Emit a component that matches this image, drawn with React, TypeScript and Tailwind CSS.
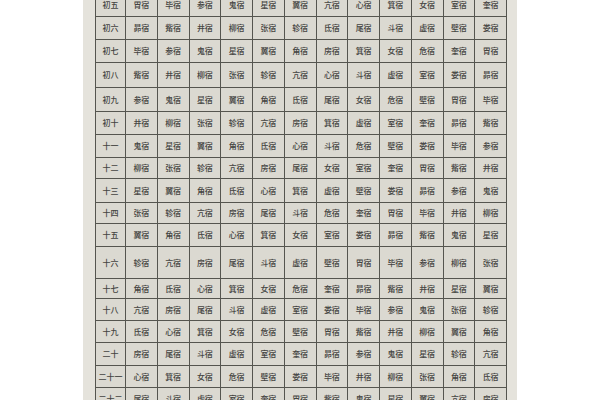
import React from 'react';

// 27 lunar mansions (宿曜 system, 牛宿 omitted)
const MANSIONS = ['角', '亢', '氐', '房', '心', '尾', '箕', '斗', '女', '虚', '危', '室', '壁', '奎', '娄', '胃', '昴', '毕', '觜', '参', '井', '鬼', '柳', '星', '张', '翼', '轸'];

// mansion of 初一 for each month
const FIRST_DAY = ['室', '奎', '胃', '毕', '参', '鬼', '张', '角', '氐', '心', '斗', '虚'];

const ROWS: { label: string; day: number; h: string }[] = [
  { label: '初五', day: 5, h: 'h-[23px]' },
  { label: '初六', day: 6, h: 'h-[23px]' },
  { label: '初七', day: 7, h: 'h-[23px]' },
  { label: '初八', day: 8, h: 'h-[25px]' },
  { label: '初九', day: 9, h: 'h-[24px]' },
  { label: '初十', day: 10, h: 'h-[23px]' },
  { label: '十一', day: 11, h: 'h-[23px]' },
  { label: '十二', day: 12, h: 'h-[21px]' },
  { label: '十三', day: 13, h: 'h-[24px]' },
  { label: '十四', day: 14, h: 'h-[21px]' },
  { label: '十五', day: 15, h: 'h-[23px]' },
  { label: '十六', day: 16, h: 'h-[32px]' },
  { label: '十七', day: 17, h: 'h-[20px]' },
  { label: '十八', day: 18, h: 'h-[22px]' },
  { label: '十九', day: 19, h: 'h-[22px]' },
  { label: '二十', day: 20, h: 'h-[23px]' },
  { label: '二十一', day: 21, h: 'h-[22px]' },
  { label: '二十二', day: 22, h: 'h-[22px]' },
];

function mansionFor(month: number, day: number) {
  const start = MANSIONS.indexOf(FIRST_DAY[month]);
  return MANSIONS[(start + day - 1) % MANSIONS.length] + '宿';
}

export default function App() {
  return (
    <div className="flex h-[400px] w-[600px] justify-center overflow-hidden bg-white font-['Noto_Sans_CJK_SC',sans-serif]">
      <div className="h-full w-[434px] bg-[#e5e3dc] pl-[12px]">
        <table className="-mt-[7px] w-[412px] table-fixed border-collapse border border-[#55554f] text-[8px] text-[#444441]">
          <colgroup>
            <col className="w-[30px]" />
            {FIRST_DAY.map((m) => (
              <col key={m} />
            ))}
          </colgroup>
          <tbody>
            {ROWS.map((row) => (
              <tr key={row.label} className={row.h}>
                <td className="border border-[#55554f] bg-[#dbd9d1] p-0 text-center font-medium whitespace-nowrap">
                  {row.label}
                </td>
                {FIRST_DAY.map((m, i) => (
                  <td key={m} className="border border-[#55554f] bg-[#dbd9d1] p-0 text-center font-medium whitespace-nowrap">
                    {mansionFor(i, row.day)}
                  </td>
                ))}
              </tr>
            ))}
          </tbody>
        </table>
      </div>
    </div>
  );
}
